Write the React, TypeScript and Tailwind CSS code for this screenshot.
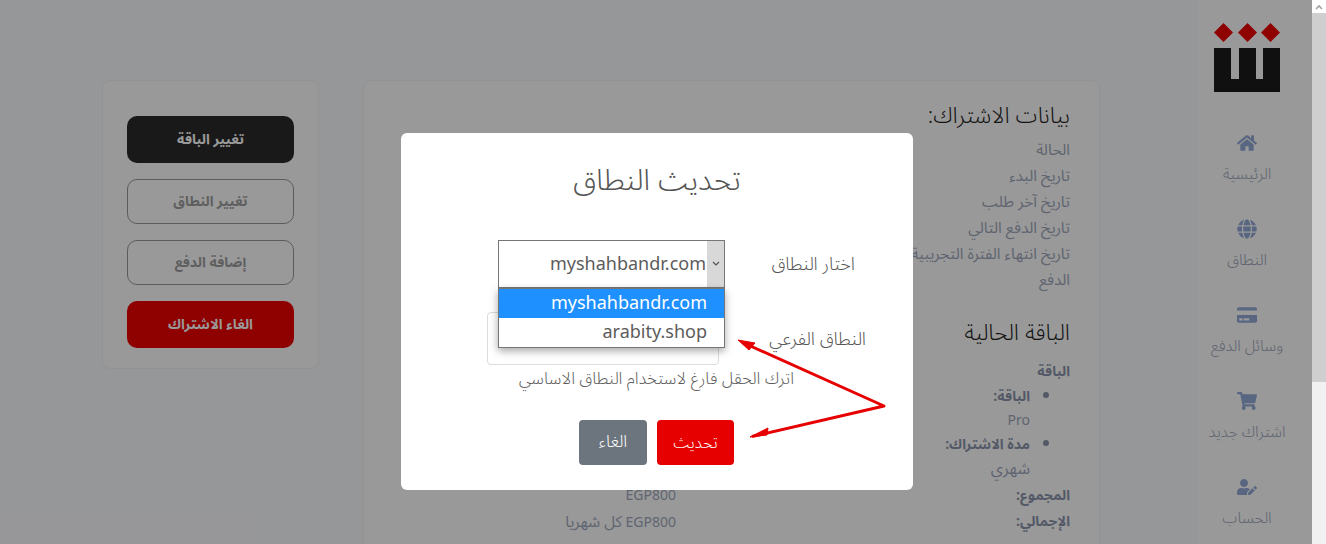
import { FaHome, FaGlobe, FaCreditCard, FaShoppingCart, FaUserEdit } from "react-icons/fa";

const font = "[font-family:'Noto_Sans_Arabic','Open_Sans','Noto_Sans','DejaVu_Sans',sans-serif]";

const nav = [
  { label: "الرئيسية", Icon: FaHome },
  { label: "النطاق", Icon: FaGlobe },
  { label: "وسائل الدفع", Icon: FaCreditCard },
  { label: "اشتراك جديد", Icon: FaShoppingCart },
  { label: "الحساب", Icon: FaUserEdit },
];

const rows = ["الحالة", "تاريخ البدء", "تاريخ آخر طلب", "تاريخ الدفع التالي", "تاريخ انتهاء الفترة التجريبية", "الدفع"];

function Logo() {
  return (
    <svg width="66" height="69" viewBox="0 0 66 69">
      <path d="M9.5 0L19 9.5L9.5 19L0 9.5Z M33.5 0L43 9.5L33.5 19L24 9.5Z M56.5 0L66 9.5L56.5 19L47 9.5Z" fill="#ee0000" />
      <path d="M0 25H17V56H25V25H42V56H49V25H66V69H0Z" fill="#1c1c1c" />
    </svg>
  );
}

export default function App() {
  return (
    <div className={`flex h-[544px] w-[1326px] overflow-hidden ${font}`}>
      <div dir="rtl" className="relative flex h-[544px] w-[1312px] overflow-hidden bg-[#fbfcff]">
        <aside className="flex w-[115px] shrink-0 flex-col items-center bg-white pr-[15px] pt-[23px]">
          <Logo />
          <nav className="mt-[41px] flex flex-col gap-[35px]">
            {nav.map(({ label, Icon }) => (
              <div key={label} className="flex flex-col items-center">
                <Icon className="h-5 w-5 text-[#94abd8]" />
                <span className="mt-[11px] whitespace-nowrap text-[15.5px] font-light leading-5 text-[#9ea6ba]">{label}</span>
              </div>
            ))}
          </nav>
        </aside>

        <main className="mr-[97px] mt-[80px] flex flex-1 items-start gap-[44px]">
          <section className="h-[600px] w-[737px] shrink-0 rounded-lg border border-[#f3f4f6] bg-white pr-[29px] pt-[21px]">
            <h2 className="text-[22.5px] font-light leading-7 text-[#222222]">بيانات الاشتراك:</h2>
            <div className="mb-[26px] mt-[7px] text-[15.5px] leading-[26px] text-[#a0a8bc]">
              {rows.map((r) => (
                <div key={r}>{r}</div>
              ))}
            </div>
            <h2 className="text-[22.5px] font-light leading-7 text-[#222222]">الباقة الحالية</h2>
            <div className="mt-[12px] text-sm font-bold leading-[26px] text-[#8c95ac]">الباقة</div>
            <ul className="list-disc pr-[40px] text-sm leading-6 text-[#a0a8bc]">
              <li className="font-bold text-[#8c95ac]">الباقة:</li>
              <div>Pro</div>
              <li className="font-bold text-[#8c95ac]">مدة الاشتراك:</li>
              <div className="text-base">شهري</div>
            </ul>
            <div className="mt-[2px] grid grid-cols-[394px_1fr] text-sm leading-[26px]">
              <div className="font-bold text-[#8c95ac]">المجموع:</div>
              <div className="text-[#a0a8bc]">EGP800</div>
              <div className="font-bold text-[#8c95ac]">الإجمالي:</div>
              <div className="text-[#a0a8bc]">
                EGP800 <span className="text-[15.5px]">كل شهريا</span>
              </div>
            </div>
          </section>

          <section className="flex w-[217px] shrink-0 flex-col gap-4 rounded-lg border border-[#f3f4f6] bg-white px-[24px] pb-[20px] pt-[35px] text-sm font-bold">
            <button className="h-[47px] rounded-[10px] bg-[#2b2b2b] text-white">تغيير الباقة</button>
            <button className="h-[45px] rounded-[10px] border border-[#9a9a9a] text-[#9f9f9f]">تغيير النطاق</button>
            <button className="h-[45px] rounded-[10px] border border-[#9a9a9a] text-[#9f9f9f]">إضافة الدفع</button>
            <button className="h-[47px] rounded-[10px] bg-[#ee0000] text-white">الغاء الاشتراك</button>
          </section>
        </main>

        <div className="absolute inset-0 bg-black/40" />

        <div className="absolute left-[401px] top-[133px] h-[357px] w-[512px] rounded-md bg-white pt-[28px] text-[#555555]">
          <h1 className="text-center text-[30px] font-light leading-10">تحديث النطاق</h1>

          <div className="mt-[39px] flex items-center pr-[58px]">
            <label className="w-[130px] text-lg font-light">اختار النطاق</label>
            <div className="relative h-[48px] w-[227px] border border-[#767676] bg-white">
              <div dir="ltr" className="flex h-full items-center justify-end">
                <span className="text-lg text-[#5c5c5c]">myshahbandr.com</span>
                <span className="ml-[1px] flex h-full w-[17px] items-center justify-center bg-[#d8d8d8]">
                  <svg width="8" height="6" viewBox="0 0 8 6" fill="none" stroke="#555" strokeWidth="1.2">
                    <path d="M1 1l3 3 3-3" />
                  </svg>
                </span>
              </div>
              <div
                dir="ltr"
                className="absolute left-[-1px] top-[47px] z-20 w-[227px] border border-[#767676] bg-white text-right text-lg leading-[29px] shadow-[0_3px_8px_rgba(0,0,0,0.35)]"
              >
                <div className="bg-[#1e90ff] pr-[17px] text-white">myshahbandr.com</div>
                <div className="pr-[17px] text-[#5c5c5c]">arabity.shop</div>
              </div>
            </div>
          </div>

          <div className="mt-[24px] flex items-center pr-[47px]">
            <label className="w-[147px] text-lg font-light">النطاق الفرعي</label>
            <div className="h-[53px] w-[232px] rounded border border-[#dcdcdc] bg-white" />
          </div>

          <p className="mt-[4px] pr-[119px] text-[16.75px] font-light leading-5 text-[#5c5c5c]">اترك الحقل فارغ لاستخدام النطاق الاساسي</p>

          <div className="mt-[31px] flex gap-[10px] pr-[179px] font-light">
            <button className="h-[45px] w-[77px] rounded bg-[#e60000] text-base text-white">تحديث</button>
            <button className="h-[45px] w-[68px] rounded bg-[#6c757d] text-[17px] text-white">الغاء</button>
          </div>
        </div>

        <svg className="absolute left-0 top-0 z-30" width="1312" height="544" fill="none">
          <path d="M752 436.5L884 406L746 344" stroke="#e60000" strokeWidth="3" strokeLinejoin="round" />
          <path d="M750 437L768 428L767 435ZM738 340L755 343L749 350Z" fill="#e60000" stroke="#e60000" />
        </svg>
      </div>

      <div className="flex w-[14px] shrink-0 flex-col bg-[#f1f1f1]">
        <div className="flex h-[13px] items-center justify-center bg-white">
          <svg width="8" height="6" viewBox="0 0 8 6" fill="none" stroke="#a3a3a3" strokeWidth="1.6">
            <path d="M1 5l3-3 3 3" />
          </svg>
        </div>
        <div className="h-[369px] bg-[#cfcfcf]" />
      </div>
    </div>
  );
}
